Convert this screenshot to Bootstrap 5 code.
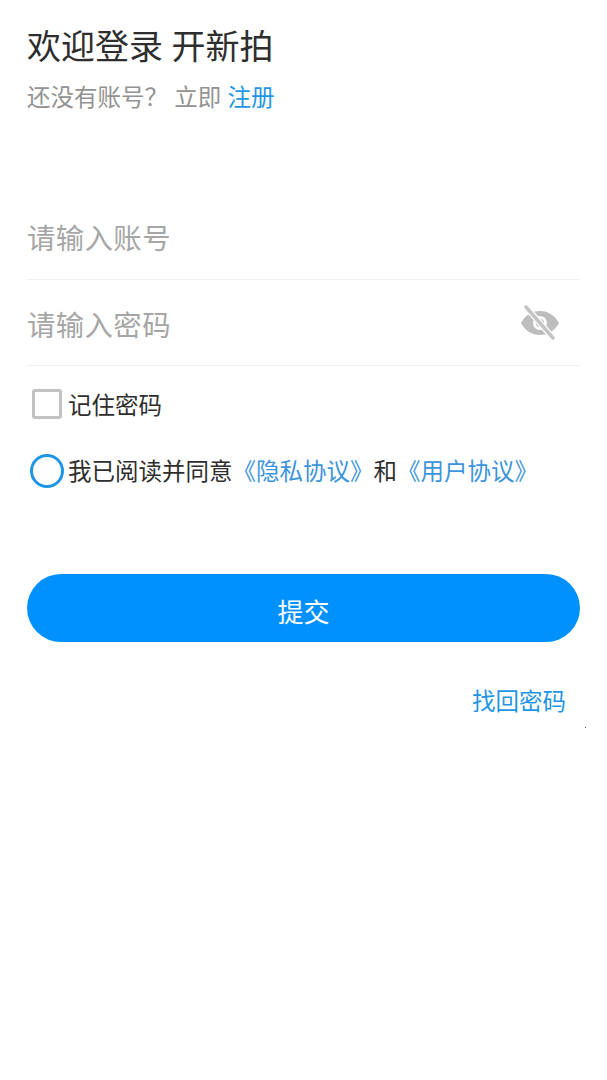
<!DOCTYPE html>
<html lang="zh">
<head>
<meta charset="utf-8">
<link href="https://cdn.jsdelivr.net/npm/bootstrap@5.3.0/dist/css/bootstrap.min.css" rel="stylesheet">
<style>
body{background:#fff;font-family:"Noto Sans CJK SC","Liberation Sans",sans-serif;color:#222;}
.pg{padding:0 27px;width:607px;height:1080px;position:relative;}
.ttl{font-size:34px;line-height:40px;padding-top:25px;color:#2e2e2e;font-weight:400;margin:0;word-spacing:1px;}
.sub{font-size:23.5px;line-height:30px;margin-top:16px;color:#929292;word-spacing:1px;}
.lnk{color:#1f96e4;text-decoration:none;}
.fld{border-bottom:1px solid #f0f0f0;font-size:28.4px;letter-spacing:.4px;color:#a6a6a6;padding-right:20px;}
.fld1{margin-top:82px;height:87px;padding-top:2px;}
.fld2{height:86px;}
.phd{padding-top:3px;}
.chk{width:30px;height:30px;border:3px solid #c2c2c2;border-radius:3px;margin-left:5px;flex:none;}
.rad{width:34px;height:34px;border:3.5px solid #1f96e4;border-radius:50%;margin-left:3px;margin-right:1px;margin-top:-1px;flex:none;}
.ln{font-size:23.5px;color:#2e2e2e;white-space:nowrap;}
.ln1{margin-top:22px;height:32px;gap:6px;}
.ln1 span+span{padding-top:2px;}
.ln2{margin-top:32px;height:38px;gap:3px;}
.lnk2{color:#3c94dc;text-decoration:none;}
.sbm{display:block;width:100%;height:68px;margin-top:84px;border:0;border-radius:34px;padding-top:11px;background:#0091ff;color:#fff;font-size:26px;}
.fgt{font-size:23.5px;margin-top:42px;padding-right:14px;line-height:32px;text-align:right;}
.spk{position:absolute;left:585px;top:727px;width:1px;height:1px;background:#555;}
</style>
</head>
<body>
<div class="pg">
  <h1 class="ttl">欢迎登录 开新拍</h1>
  <div class="sub">还没有账号？ 立即 <a class="lnk" href="#">注册</a></div>
  <div class="fld fld1 d-flex align-items-center">请输入账号</div>
  <div class="fld fld2 d-flex align-items-center justify-content-between">
    <span class="phd">请输入密码</span>
    <svg width="40" height="36" viewBox="0 0 40 36" aria-hidden="true">
      <path fill="#bdbdbd" fill-rule="evenodd" d="M1 18C6 9 13 6 20 6s14 3 19 12c-5 9-12 12-19 12S6 27 1 18Zm19-7a7 7 0 1 0 0 14 7 7 0 0 0 0-14Z"/>
      <circle cx="20" cy="18" r="4" fill="#bdbdbd"/>
      <path d="M6 2 33 33" stroke="#fff" stroke-width="6"/>
      <path d="M6 2 33 33" stroke="#c4c4c4" stroke-width="3.5" stroke-linecap="round"/>
    </svg>
  </div>
  <div class="ln ln1 d-flex align-items-center"><span class="chk"></span><span>记住密码</span></div>
  <div class="ln ln2 d-flex align-items-center"><span class="rad"></span><span>我已阅读并同意<a class="lnk2" href="#">《隐私协议》</a>和<a class="lnk2" href="#">《用户协议》</a></span></div>
  <button class="btn sbm" type="button">提交</button>
  <div class="fgt"><a class="lnk" href="#">找回密码</a></div>
  <span class="spk"></span>
</div>
<script src="https://cdn.jsdelivr.net/npm/bootstrap@5.3.0/dist/js/bootstrap.bundle.min.js"></script>
</body>
</html>
